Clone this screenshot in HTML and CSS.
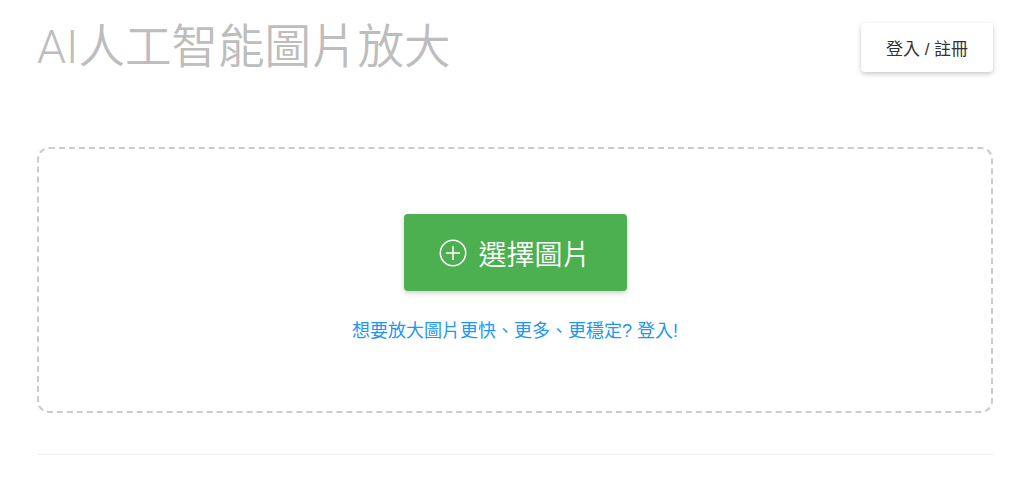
FILE: index.html
```html
<!DOCTYPE html>
<html lang="zh-Hant">
<head>
    <meta charset="UTF-8">
    <meta name="viewport" content="width=device-width, initial-scale=1.0">
    <title>AI人工智能圖片放大</title>
    <link rel="stylesheet" href="styles.css">
</head>
<body>
    <div class="page">
        <header class="header">
            <h1 class="title">AI人工智能圖片放大</h1>
            <button class="login-button">登入 / 註冊</button>
        </header>

        <section class="upload-box">
            <button class="select-button">
                <svg class="plus-icon" viewBox="0 0 28 28" width="28" height="28">
                    <circle cx="14" cy="14" r="12.7" fill="none" stroke="#fff" stroke-width="1.5"/>
                    <path d="M14 7v14M7 14h14" stroke="#fff" stroke-width="1.5" fill="none"/>
                </svg>
                <span>選擇圖片</span>
            </button>
            <a href="#login" class="login-hint">想要放大圖片更快、更多、更穩定? 登入!</a>
        </section>

        <hr class="divider">
    </div>
</body>
</html>
```

FILE: styles.css
```css
* {
    margin: 0;
    padding: 0;
    box-sizing: border-box;
    font-family: 'Helvetica Neue', 'Liberation Sans', 'Noto Sans CJK TC', sans-serif;
}

body {
    background: #fff;
}

.page {
    width: 956px;
    margin-left: 37px;
}

.header {
    display: flex;
    justify-content: space-between;
    align-items: flex-start;
    padding-top: 23px;
    height: 147px;
}

.title {
    font-family: Roboto, 'Noto Sans CJK TC', sans-serif;
    font-size: 46.5px;
    font-weight: 350;
    color: #bdbdbd;
    line-height: 56px;
    margin-top: -4px;
}

.login-button {
    background: #fff;
    border: none;
    border-radius: 4px;
    width: 132px;
    height: 49px;
    font-size: 17px;
    color: #333;
    box-shadow: 0 2px 5px rgba(0,0,0,0.22);
    cursor: pointer;
}

.upload-box {
    height: 266px;
    border: 2px dashed #ccc;
    border-radius: 12px;
    display: flex;
    flex-direction: column;
    align-items: center;
    padding-top: 65px;
}

.select-button {
    display: flex;
    align-items: center;
    justify-content: center;
    gap: 11px;
    width: 223px;
    height: 77px;
    background: #4caf50;
    color: #fff;
    border: none;
    border-radius: 4px;
    font-size: 28px;
    font-weight: 350;
    box-shadow: 0 2px 5px rgba(0,0,0,0.2);
    cursor: pointer;
}

.login-hint {
    margin-top: 25px;
    font-size: 18px;
    color: #2196f3;
    text-decoration: none;
}

.divider {
    border: none;
    border-top: 1px solid #eee;
    margin-top: 41px;
}
```
